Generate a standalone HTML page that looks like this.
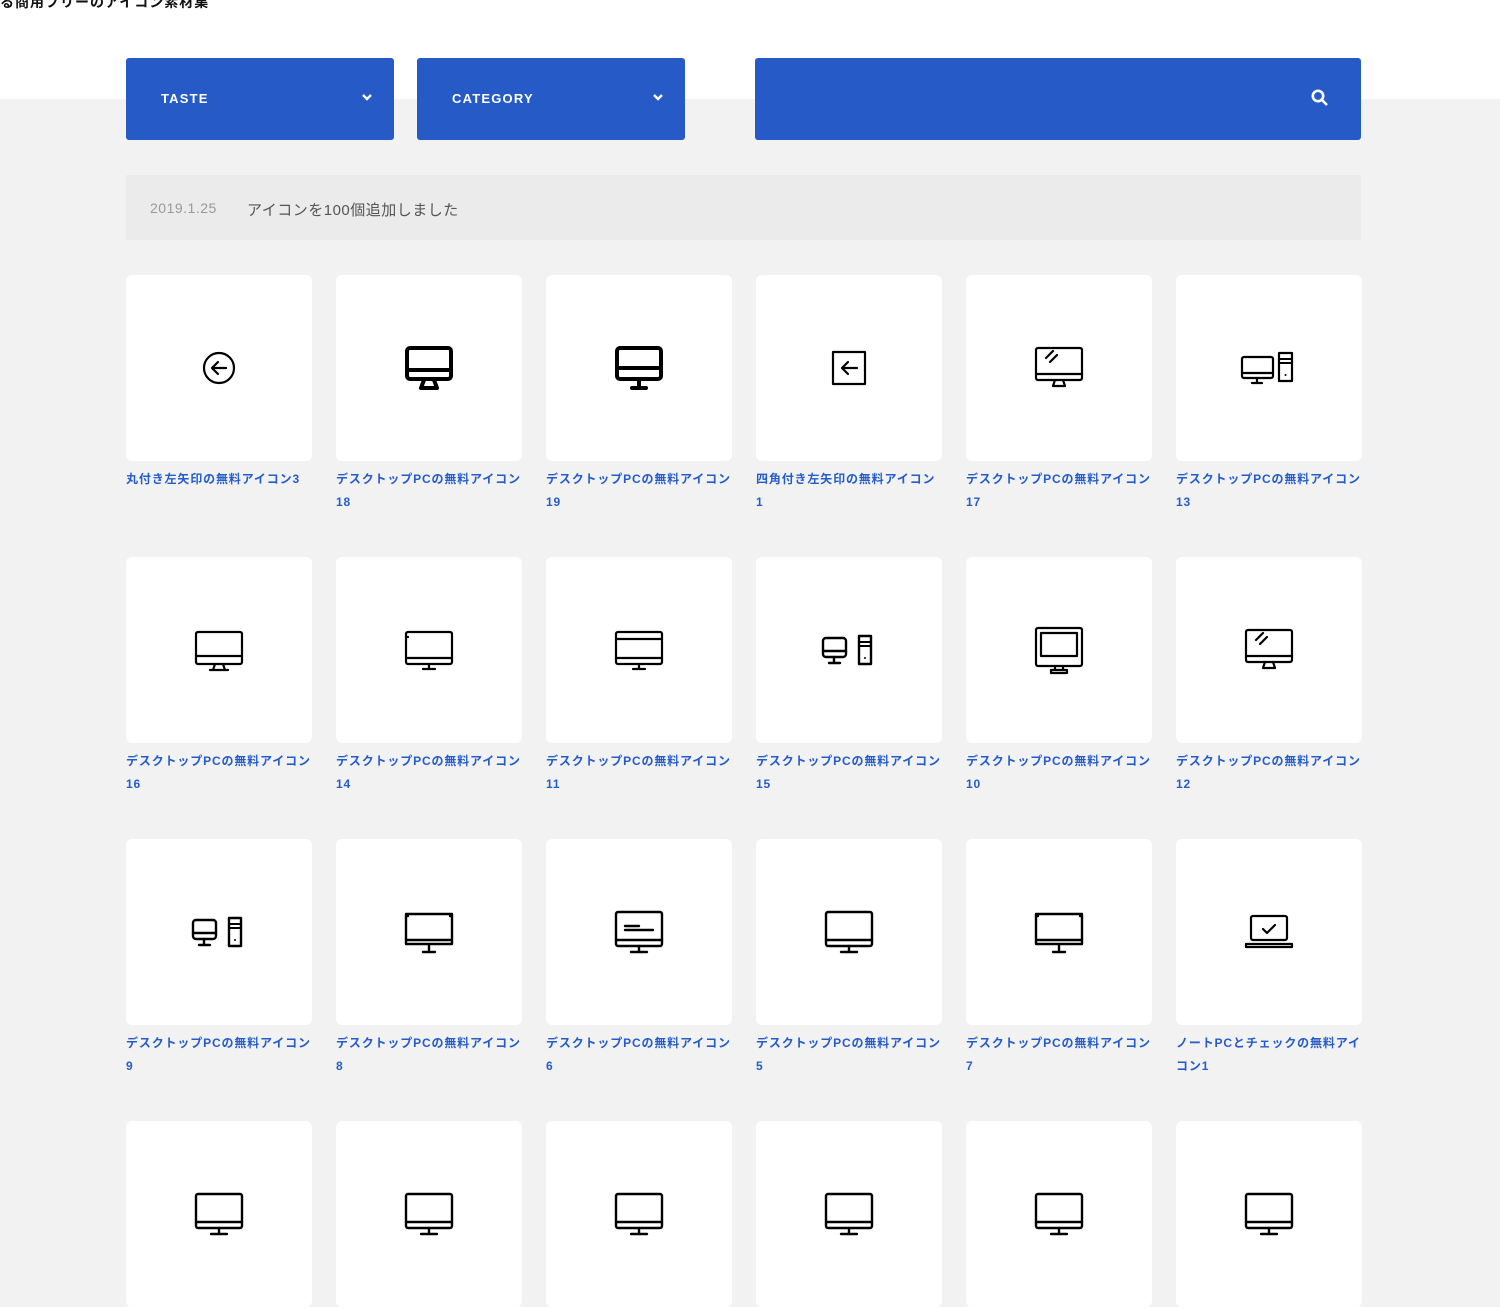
<!DOCTYPE html>
<html><head><meta charset="utf-8"><style>
*{margin:0;padding:0;box-sizing:border-box}
body{width:1500px;height:1125px;overflow:hidden;background:#f2f2f2;font-family:"Liberation Sans","Noto Sans CJK JP",sans-serif;position:relative}
.top{position:absolute;left:0;top:0;width:1500px;height:99px;background:#fff}
.title{position:absolute;left:0;top:-8px;font-size:14px;font-weight:bold;color:#111;letter-spacing:1px}
.sel{position:absolute;top:58px;height:82px;background:#265ac7;border-radius:3px;color:#fff;font-weight:bold;font-size:13px;letter-spacing:1.2px}
.sel span{position:absolute;left:35px;top:33px}
.sel svg{position:absolute;right:22px;top:36px}
.news{position:absolute;left:126px;top:175px;width:1235px;height:65px;background:#ebebeb;font-size:15px;color:#555}
.news .d{position:absolute;left:24px;top:25px;color:#999;font-size:14px;letter-spacing:.5px}
.news .t{position:absolute;left:121px;top:24px;letter-spacing:.5px}
.card{position:absolute;width:186px;height:186px;background:#fff;border-radius:6px}
.card svg{position:absolute;left:63px;top:63px}
.lab{position:absolute;width:200px;font-size:12px;font-weight:bold;color:#255ccb;line-height:23px;letter-spacing:0.85px;white-space:nowrap}
</style></head><body>
<div class="top"></div>
<div class="title">る商用フリーのアイコン素材集</div>
<div class="sel" style="left:126px;width:268px"><span>TASTE</span><svg width="10" height="7" viewBox="0 0 10 7"><path d="M1 1l4 4 4-4" stroke="#fff" stroke-width="2.4" fill="none"/></svg></div>
<div class="sel" style="left:417px;width:268px"><span>CATEGORY</span><svg width="10" height="7" viewBox="0 0 10 7"><path d="M1 1l4 4 4-4" stroke="#fff" stroke-width="2.4" fill="none"/></svg></div>
<div class="sel" style="left:755px;width:606px"><svg style="right:32px;top:31px" width="18" height="18" viewBox="0 0 18 18"><circle cx="7" cy="7" r="5.2" stroke="#fff" stroke-width="2.6" fill="none"/><path d="M11 11l5 5" stroke="#fff" stroke-width="2.6"/></svg></div>
<div class="news"><span class="d">2019.1.25</span><span class="t">アイコンを100個追加しました</span></div>
<div id="g"></div>
<script>
const S='fill="none" stroke="#000" stroke-linecap="round" stroke-linejoin="round"';
const ic={
a:`<circle cx="30" cy="30" r="15" ${S} stroke-width="2.2"/><path d="M37 30H23M29 24l-6 6 6 6" ${S} stroke-width="2.2"/>`,
b:`<rect x="8" y="10" width="44" height="31" rx="3" ${S} stroke-width="4"/><path d="M8 32h44" ${S} stroke-width="4"/><path d="M25 42l-3 8h16l-3-8" ${S} stroke-width="4"/>`,
c:`<rect x="8" y="10" width="44" height="31" rx="3" ${S} stroke-width="4"/><path d="M10 30h40M30 41v8M23 50h14" ${S} stroke-width="4"/>`,
d:`<rect x="14" y="14" width="32" height="32" ${S} stroke-width="2.2"/><path d="M38 30H23M29 24l-6 6 6 6" ${S} stroke-width="2.2"/>`,
e:`<rect x="7" y="10" width="46" height="32" rx="2" ${S} stroke-width="2.2"/><path d="M7 36h46M26 42l-2 6h12l-2-6M17 20l7-7M21 24l7-7" ${S} stroke-width="2.2"/>`,
f:`<rect x="3" y="19" width="31" height="21" rx="2" ${S} stroke-width="2.2"/><path d="M3 35h31M18 40v4M13 45h10" ${S} stroke-width="2.2"/><rect x="40" y="15" width="13" height="28" ${S} stroke-width="2.2"/><path d="M40 21h13M40 25h13" ${S} stroke-width="2"/><circle cx="46.5" cy="37" r="1" fill="#000"/>`,
g:`<rect x="7" y="12" width="46" height="32" rx="2" ${S} stroke-width="2.2"/><path d="M7 36h46M26 44l-2 6h12l-2-6M21 50h18" ${S} stroke-width="2.2"/>`,
h:`<rect x="7" y="12" width="46" height="32" rx="2" ${S} stroke-width="2.2"/><path d="M7 38h46M30 44v5M24 49h12M7 17h2" ${S} stroke-width="2.2"/>`,
i:`<rect x="7" y="12" width="46" height="32" rx="2" ${S} stroke-width="2.2"/><path d="M7 19h46M7 38h46M30 44v5M24 49h12" ${S} stroke-width="2.2"/>`,
j:`<rect x="7" y="8" width="46" height="38" rx="2" ${S} stroke-width="2.2"/><rect x="12" y="13" width="36" height="23" ${S} stroke-width="2.2"/><path d="M26 46v4M34 46v4M22 53h16v-3H22z" ${S} stroke-width="2.2"/>`,
k:`<rect x="4" y="18" width="23" height="19" rx="3" ${S} stroke-width="2.4"/><path d="M4 31h23M15 37v5M10 43h11" ${S} stroke-width="2.4"/><rect x="40" y="16" width="12" height="28" ${S} stroke-width="2.4"/><path d="M40 22h12M40 26h12" ${S} stroke-width="2"/><circle cx="46" cy="38" r="1" fill="#000"/>`,
l:`<rect x="7" y="10" width="46" height="34" rx="2" ${S} stroke-width="2.4"/><path d="M7 38h46M30 44v5M22 50h16M16 24h14M16 28h28" ${S} stroke-width="2.4"/>`,
m:`<rect x="7" y="10" width="46" height="34" rx="2" ${S} stroke-width="2.4"/><path d="M7 38h46M30 44v5M22 50h16" ${S} stroke-width="2.4"/>`,
n:`<path d="M7 14h2M51 14h2M7 12v30h46V12H7M7 38h46M30 42v6M24 50h12" ${S} stroke-width="2.4"/>`,
o:`<rect x="12" y="14" width="36" height="24" rx="2" ${S} stroke-width="2.2"/><path d="M7 42h46v3H7zM24 27l4 4 8-8" ${S} stroke-width="2.2"/>`
};
const D='デスクトップPCの無料アイコン<br>';
const items=[
['a','丸付き左矢印の無料アイコン3'],['b',D+'18'],['c',D+'19'],['d','四角付き左矢印の無料アイコン<br>1'],['e',D+'17'],['f',D+'13'],
['g',D+'16'],['h',D+'14'],['i',D+'11'],['k',D+'15'],['j',D+'10'],['e',D+'12'],
['k',D+'9'],['n',D+'8'],['l',D+'6'],['m',D+'5'],['n',D+'7'],['o','ノートPCとチェックの無料アイ<br>コン1'],
['m',''],['m',''],['m',''],['m',''],['m',''],['m','']];
let h='';
items.forEach((it,k)=>{const c=k%6,r=Math.floor(k/6);const x=126+c*210,y=275+r*282;
h+=`<div class="card" style="left:${x}px;top:${y}px"><svg width="60" height="60" viewBox="0 0 60 60" style="left:63px;top:63px">${ic[it[0]]}</svg></div>`;
if(it[1])h+=`<div class="lab" style="left:${x}px;top:${y+193}px">${it[1]}</div>`;});
document.getElementById('g').innerHTML=h;
</script>
</body></html>
